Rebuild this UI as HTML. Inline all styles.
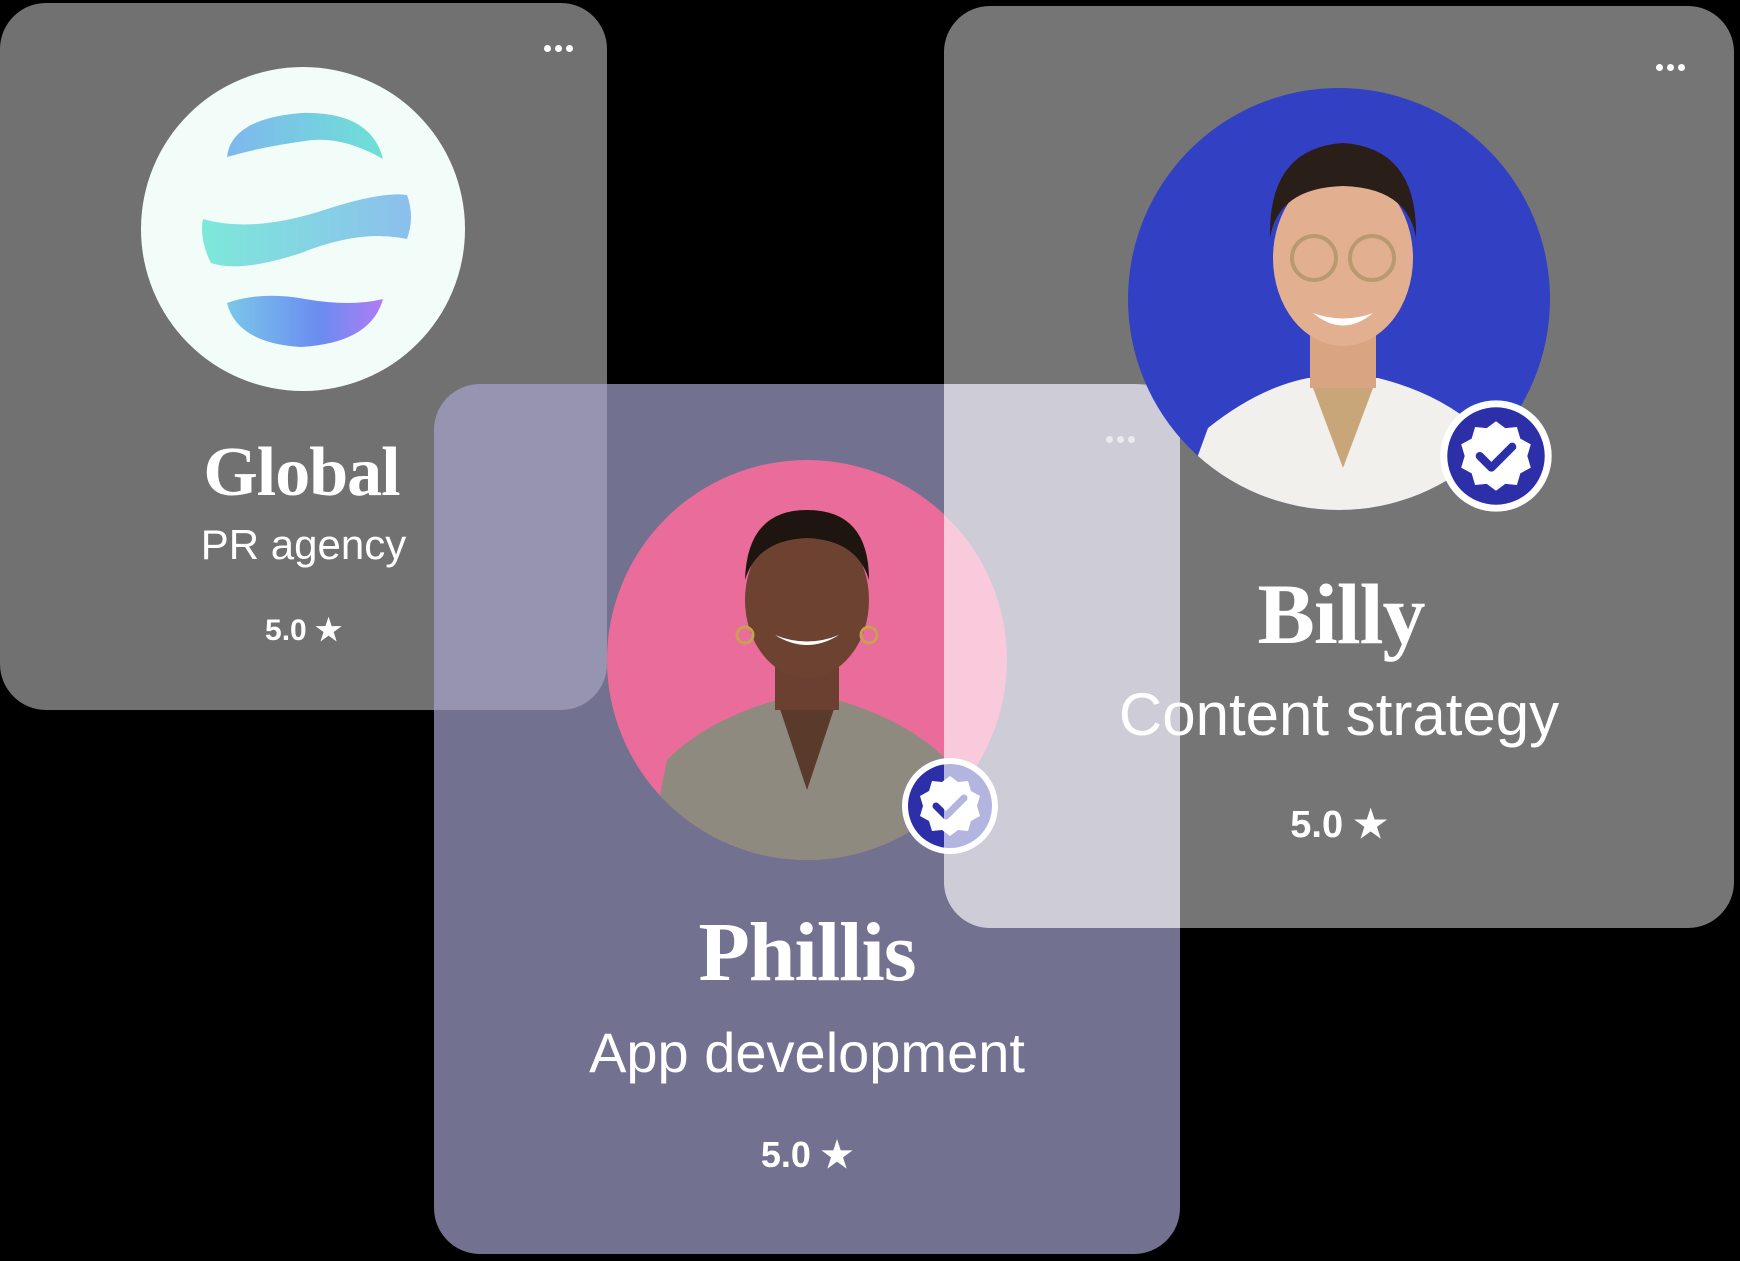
<!DOCTYPE html>
<html><head><meta charset="utf-8"><style>
html,body{margin:0;padding:0;background:#000;width:1740px;height:1261px;overflow:hidden;position:relative;font-family:"Liberation Sans",sans-serif;color:#fff}
.card{position:absolute;border-radius:46px;overflow:hidden}
.g{left:0;top:3px;width:607px;height:707px;background:#717171;z-index:1}
.p{left:434px;top:384px;width:746px;height:870px;background:#737190;z-index:2}
.b{left:944px;top:6px;width:790px;height:922px;background:rgba(255,255,255,0.46);z-index:3}
.t{position:absolute;left:0;width:100%;text-align:center;white-space:nowrap}
.name{font-family:"Liberation Serif",serif;font-weight:bold;letter-spacing:-1px}
.dots{position:absolute;font-size:0}
.dots i{display:inline-block;width:7px;height:7px;border-radius:50%;background:#fff;margin-right:4px}
</style></head><body>

<div class="card g">
  <svg style="position:absolute;left:141px;top:64px" width="324" height="324" viewBox="0 0 324 324">
    <defs>
      <linearGradient id="a" x1="0" x2="1"><stop offset="0" stop-color="#7fb7ee"/><stop offset="1" stop-color="#6ee0d6"/></linearGradient>
      <linearGradient id="m" x1="0" x2="1"><stop offset="0" stop-color="#7de8da"/><stop offset="1" stop-color="#8cbfec"/></linearGradient>
      <linearGradient id="c" x1="0" x2="1"><stop offset="0" stop-color="#7bc7ea"/><stop offset=".6" stop-color="#6a8cf0"/><stop offset="1" stop-color="#b07cf4"/></linearGradient>
    </defs>
    <circle cx="162" cy="162" r="162" fill="#f2fdf9"/>
    <path d="M86 90 Q90 52 160 46 Q230 44 242 92 Q200 68 164 74 Q120 80 86 90Z" fill="url(#a)"/>
    <path d="M62 152 Q110 166 180 144 Q240 124 266 128 Q274 150 266 172 Q220 162 160 186 Q100 206 70 196 Q58 172 62 152Z" fill="url(#m)"/>
    <path d="M86 236 Q120 224 164 232 Q210 240 242 232 Q230 276 160 280 Q96 276 86 236Z" fill="url(#c)"/>
  </svg>
  <div class="dots" style="left:544px;top:42px"><i></i><i></i><i></i></div>
  <div class="t name" style="top:430px;left:-2px;font-size:70px">Global</div>
  <div class="t" style="top:518px;font-size:42px">PR agency</div>
  <div class="t" style="top:610px;font-size:30px;font-weight:bold">5.0 ★</div>
</div>

<div class="card p">
  <div style="position:absolute;left:0;top:0;width:173px;height:326px;background:#9694b0;border-bottom-right-radius:46px"></div>
  <svg style="position:absolute;left:173px;top:76px" width="400" height="400" viewBox="0 0 400 400">
    <defs><clipPath id="cp"><circle cx="200" cy="200" r="200"/></clipPath></defs>
    <g clip-path="url(#cp)">
      <rect width="400" height="400" fill="#ea6c9b"/>
      <path d="M40 400 L60 300 Q100 260 170 240 L230 240 Q300 260 340 300 L360 400Z" fill="#8e8a80"/>
      <path d="M170 240 L200 330 L230 240Z" fill="#5a3a2a"/>
      <rect x="168" y="190" width="64" height="60" fill="#6b4030"/>
      <ellipse cx="200" cy="140" rx="62" ry="78" fill="#6e4230"/>
      <path d="M138 120 Q140 50 200 50 Q262 50 262 120 Q250 80 200 78 Q150 80 138 120Z" fill="#1e1410"/>
      <path d="M168 175 Q200 195 232 175 Q200 188 168 175Z" fill="#fff"/>
      <circle cx="138" cy="175" r="8" fill="none" stroke="#c9a050" stroke-width="3"/>
      <circle cx="262" cy="175" r="8" fill="none" stroke="#c9a050" stroke-width="3"/>
    </g>
  </svg>
  <div class="dots" style="left:672px;top:52px"><i style="opacity:.6"></i><i style="opacity:.6"></i><i style="opacity:.6"></i></div>
  <svg style="position:absolute;left:466px;top:372px" width="100" height="100" viewBox="0 0 100 100">
    <circle cx="50" cy="50" r="48" fill="#fff"/><circle cx="50" cy="50" r="42" fill="#2d2fa8"/>
    <path d="M50 20 l8 6 10 -1 3 10 9 5 -3 10 3 10 -9 5 -3 10 -10 -1 -8 6 -8 -6 -10 1 -3 -10 -9 -5 3 -10 -3 -10 9 -5 3 -10 10 1Z" fill="#fff"/>
    <path d="M36 50 l10 10 18 -18" fill="none" stroke="#2d2fa8" stroke-width="7" stroke-linecap="round" stroke-linejoin="round"/>
  </svg>
  <div class="t name" style="top:520px;font-size:84px">Phillis</div>
  <div class="t" style="top:636px;font-size:56px">App development</div>
  <div class="t" style="top:750px;font-size:36px;font-weight:bold">5.0 ★</div>
</div>

<div class="card b">
  <div style="position:absolute;left:0;top:378px;width:236px;height:544px;background:rgba(255,255,255,0.34)"></div>
  <svg style="position:absolute;left:184px;top:82px" width="422" height="422" viewBox="0 0 422 422">
    <defs><clipPath id="cb"><circle cx="211" cy="211" r="211"/></clipPath></defs>
    <g clip-path="url(#cb)">
      <rect width="422" height="422" fill="#3240c4"/>
      <path d="M50 422 L80 340 Q130 300 180 290 L250 290 Q310 305 350 340 L380 422Z" fill="#f2f0ec"/>
      <path d="M185 300 L215 380 L245 300Z" fill="#c9a67a"/>
      <rect x="182" y="230" width="66" height="70" fill="#d9a482"/>
      <ellipse cx="215" cy="170" rx="70" ry="88" fill="#e2b090"/>
      <path d="M142 150 Q140 60 215 55 Q290 60 288 150 Q280 100 215 98 Q150 100 142 150Z" fill="#2a1e18"/>
      <circle cx="186" cy="170" r="22" fill="none" stroke="#b89a70" stroke-width="4"/>
      <circle cx="244" cy="170" r="22" fill="none" stroke="#b89a70" stroke-width="4"/>
      <path d="M185 225 Q215 250 245 225 Q215 236 185 225Z" fill="#fff"/>
    </g>
  </svg>
  <svg style="position:absolute;left:494px;top:392px" width="116" height="116" viewBox="0 0 100 100">
    <circle cx="50" cy="50" r="48" fill="#fff"/><circle cx="50" cy="50" r="42" fill="#2d2fa8"/>
    <path d="M50 20 l8 6 10 -1 3 10 9 5 -3 10 3 10 -9 5 -3 10 -10 -1 -8 6 -8 -6 -10 1 -3 -10 -9 -5 3 -10 -3 -10 9 -5 3 -10 10 1Z" fill="#fff"/>
    <path d="M36 50 l10 10 18 -18" fill="none" stroke="#2d2fa8" stroke-width="7" stroke-linecap="round" stroke-linejoin="round"/>
  </svg>
  <div class="dots" style="left:712px;top:58px"><i></i><i></i><i></i></div>
  <div class="t name" style="top:558px;left:2px;font-size:86px">Billy</div>
  <div class="t" style="top:674px;font-size:60px">Content strategy</div>
  <div class="t" style="top:796px;font-size:38px;font-weight:bold">5.0 ★</div>
</div>
</body></html>
